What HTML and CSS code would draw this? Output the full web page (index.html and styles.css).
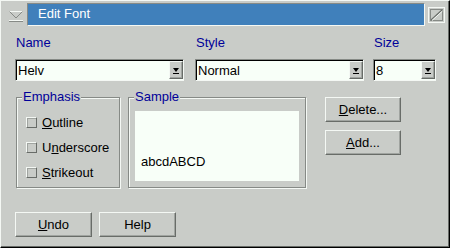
FILE: index.html
```html
<!DOCTYPE html>
<html lang="en">
<head>
  <meta charset="UTF-8" />
  <title>Edit Font</title>
  <link rel="stylesheet" href="styles.css">
</head>
<body>
  <div class="window">
    <div class="titlebar">
      <div class="menu-btn">
        <svg width="14" height="12" viewBox="0 0 14 12">
          <polyline points="0.5,0.5 13.5,0.5 7,7" fill="none" stroke="#f4f8f4" stroke-width="1" />
          <polyline points="0.5,0.5 7,7 13.5,0.5" fill="none" stroke="#868a86" stroke-width="1" />
          <line x1="0" y1="9.5" x2="14" y2="9.5" stroke="#f4f8f4" />
          <line x1="0" y1="10.5" x2="14" y2="10.5" stroke="#868a86" />
        </svg>
      </div>
      <div class="title">Edit Font</div>
      <div class="max-btn">
        <svg width="17" height="16" viewBox="0 0 17 16">
          <rect x="0.5" y="0.5" width="16" height="15" fill="#c9ccc8" stroke="#f4f8f4" />
          <rect x="2.5" y="2.5" width="12" height="11" fill="none" stroke="#868a86" />
          <line x1="3" y1="13" x2="14" y2="3" stroke="#686c68" stroke-width="1.2" />
          <line x1="4" y1="13.5" x2="14.5" y2="4" stroke="#f4f8f4" stroke-width="1" />
        </svg>
      </div>
    </div>

    <div class="content">
      <div class="fields">
        <div class="field field-name">
          <div class="field-label">Name</div>
          <div class="combo"><span class="combo-text">Helv</span><span class="combo-arrow"></span></div>
        </div>
        <div class="field field-style">
          <div class="field-label">Style</div>
          <div class="combo"><span class="combo-text">Normal</span><span class="combo-arrow"></span></div>
        </div>
        <div class="field field-size">
          <div class="field-label">Size</div>
          <div class="combo"><span class="combo-text">8</span><span class="combo-arrow"></span></div>
        </div>
      </div>

      <div class="middle">
        <div class="group emphasis">
          <span class="group-title">Emphasis</span>
          <div class="check"><span class="box"></span><u>O</u>utline</div>
          <div class="check"><span class="box"></span>U<u>n</u>derscore</div>
          <div class="check"><span class="box"></span><u>S</u>trikeout</div>
        </div>
        <div class="group sample">
          <span class="group-title">Sample</span>
          <div class="sample-view">abcdABCD</div>
        </div>
        <div class="side-buttons">
          <button class="btn"><u>D</u>elete...</button>
          <button class="btn"><u>A</u>dd...</button>
        </div>
      </div>

      <div class="bottom-buttons">
        <button class="btn"><u>U</u>ndo</button>
        <button class="btn">Help</button>
      </div>
    </div>
  </div>
</body>
</html>
```

FILE: styles.css
```css
body {
  margin: 0;
  font-family: 'Liberation Sans', Arial, sans-serif;
  font-size: 12px;
  color: #000;
}
.window {
  width: 450px;
  height: 248px;
  box-sizing: border-box;
  background: #c9ccc8;
  border-top: 1px solid #f4f8f4;
  border-left: 1px solid #f4f8f4;
  border-right: 1px solid #000;
  border-bottom: 1px solid #000;
  box-shadow: inset -1px -1px 0 #686c68;
  padding: 2px 0 0 1px;
}
.titlebar {
  display: flex;
  align-items: flex-start;
  height: 23px;
}
.menu-btn {
  width: 25px;
  height: 23px;
  padding: 8px 0 0 7px;
  box-sizing: border-box;
}
.menu-btn svg {
  display: block;
}
.title {
  width: 398px;
  height: 23px;
  box-sizing: border-box;
  background: #4080bb;
  border: 1px solid;
  border-color: #868a86 #f4f8f4 #f4f8f4 #868a86;
  color: #fff;
  font-size: 13px;
  line-height: 20px;
  padding-left: 10px;
}
.max-btn {
  padding: 4px 0 0 3px;
}
.max-btn svg {
  display: block;
}
.content {
  padding: 10px 0 0 13px;
}
.fields {
  display: flex;
}
.field-label {
  color: #000099;
  font-size: 13px;
  line-height: 14px;
  margin-bottom: 9px;
  padding-left: 1px;
}
.field-name {
  width: 169px;
  margin-right: 11px;
}
.field-style {
  width: 169px;
  margin-right: 9px;
}
.field-size {
  width: 63px;
}
.combo {
  display: flex;
  align-items: center;
  height: 22px;
  box-sizing: border-box;
  background: #f8fff8;
  border: 1px solid;
  border-color: #868a86 #f4f8f4 #f4f8f4 #868a86;
  box-shadow: inset 1px 1px 0 #000;
  padding: 1px 0 1px 2px;
}
.combo-text {
  flex: 1;
  font-size: 13px;
}
.combo-arrow {
  position: relative;
  width: 14px;
  height: 18px;
  box-sizing: border-box;
  background: #c9ccc8;
  border: 1px solid;
  border-color: #f4f8f4 #686c68 #686c68 #f4f8f4;
  box-shadow: inset -1px -1px 0 #a0a4a0;
}
.combo-arrow::before {
  content: "";
  position: absolute;
  left: 3px;
  top: 6px;
  border-left: 3px solid transparent;
  border-right: 3px solid transparent;
  border-top: 4px solid #000;
}
.combo-arrow::after {
  content: "";
  position: absolute;
  left: 3px;
  top: 11px;
  width: 6px;
  height: 1px;
  background: #000;
}
.middle {
  display: flex;
  align-items: flex-start;
  margin-top: 16px;
}
.group {
  position: relative;
  height: 91px;
  box-sizing: border-box;
  border: 1px solid #868a86;
  box-shadow: inset 1px 1px 0 #f4f8f4, 1px 1px 0 #f4f8f4;
}
.group-title {
  position: absolute;
  top: -8px;
  left: 5px;
  padding: 0 1px;
  background: #c9ccc8;
  color: #000099;
  font-size: 13px;
  line-height: 14px;
}
.emphasis {
  width: 104px;
  margin-left: 1px;
  margin-right: 8px;
  padding: 12px 0 0 9px;
}
.check {
  display: flex;
  align-items: center;
  height: 25px;
  font-size: 13px;
}
.box {
  width: 11px;
  height: 11px;
  box-sizing: border-box;
  margin-right: 5px;
  background: #c9ccc8;
  border: 1px solid;
  border-color: #f4f8f4 #686c68 #686c68 #f4f8f4;
  box-shadow: inset 1px 1px 0 #a0a4a0;
}
.sample {
  width: 178px;
  padding: 13px 6px 6px 6px;
}
.sample-view {
  height: 70px;
  box-sizing: border-box;
  background: #f8fff8;
  display: flex;
  align-items: flex-end;
  padding: 0 0 12px 6px;
  font-size: 13px;
}
.side-buttons {
  display: flex;
  flex-direction: column;
  gap: 8px;
  margin-left: 19px;
}
.btn {
  font-family: inherit;
  font-size: 13px;
  color: #000;
  background: #c9ccc8;
  height: 25px;
  width: 76px;
  padding: 0;
  border: 1px solid;
  border-color: #f4f8f4 #686c68 #686c68 #f4f8f4;
  box-shadow: inset -1px -1px 0 #a0a4a0;
}
.bottom-buttons {
  display: flex;
  gap: 7px;
  margin-top: 24px;
}
.bottom-buttons .btn {
  width: 77px;
}
```
